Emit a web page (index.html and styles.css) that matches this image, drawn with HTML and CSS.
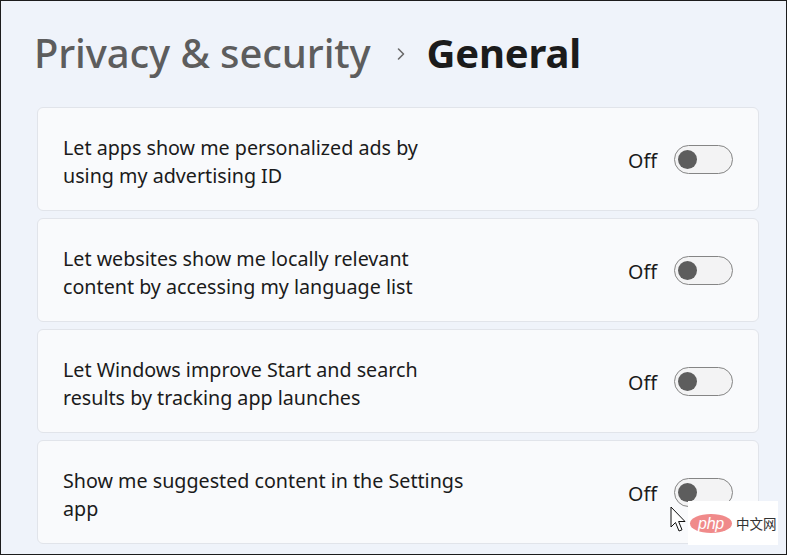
FILE: index.html
```html
<!DOCTYPE html>
<html>
<head>
<meta charset="utf-8">
<link rel="stylesheet" href="styles.css">
</head>
<body>
<div class="frame">
  <header class="crumbs">
    <span class="parent">Privacy &amp; security</span>
    <svg class="chev" width="12" height="14" viewBox="0 0 12 14"><path d="M3.5 2 L8.5 7 L3.5 12" fill="none" stroke="#6a6a6a" stroke-width="1.6" stroke-linecap="round" stroke-linejoin="round"/></svg>
    <span class="current">General</span>
  </header>
  <div class="list">
    <div class="card">
      <div class="label">Let apps show me personalized ads by<br>using my advertising ID</div>
      <div class="ctl"><span class="state">Off</span><span class="toggle"><span class="knob"></span></span></div>
    </div>
    <div class="card">
      <div class="label">Let websites show me locally relevant<br>content by accessing my language list</div>
      <div class="ctl"><span class="state">Off</span><span class="toggle"><span class="knob"></span></span></div>
    </div>
    <div class="card">
      <div class="label">Let Windows improve Start and search<br>results by tracking app launches</div>
      <div class="ctl"><span class="state">Off</span><span class="toggle"><span class="knob"></span></span></div>
    </div>
    <div class="card">
      <div class="label">Show me suggested content in the Settings<br>app</div>
      <div class="ctl"><span class="state">Off</span><span class="toggle"><span class="knob"></span></span></div>
    </div>
  </div>
  <svg class="cursor" width="18" height="28" viewBox="0 0 18 28"><path d="M1 1 L1 21 L5.5 16.5 L9 25 L12 23.8 L8.6 15.5 L15 15.5 Z" fill="#fff" stroke="#111" stroke-width="1" stroke-linejoin="round"/></svg>
  <div class="watermark">
    <span class="php">php</span>
    <span class="cn">中文网</span>
  </div>
</div>
</body>
</html>
```
FILE: styles.css
```css
html, body {
  margin: 0;
  padding: 0;
  background: #ffffff;
}
.frame {
  position: relative;
  width: 785px;
  height: 553px;
  border: 1px solid #1c1c1c;
  background: #eff3fa;
  font-family: "Noto Sans", "Open Sans", sans-serif;
  overflow: hidden;
}
.crumbs {
  display: flex;
  align-items: center;
  height: 106px;
  padding-left: 33px;
  padding-bottom: 4px;
  box-sizing: border-box;
}
.parent {
  font-size: 40px;
  font-weight: 500;
  color: #5d5d5d;
  letter-spacing: -0.1px;
}
.chev {
  margin: 4px 20px 0 24px;
}
.current {
  font-size: 40px;
  font-weight: 700;
  color: #1b1b1b;
  letter-spacing: -0.2px;
}
.list {
  display: flex;
  flex-direction: column;
  gap: 7px;
  margin-left: 36px;
  width: 722px;
}
.card {
  height: 104px;
  box-sizing: border-box;
  border: 1px solid #e1e4ea;
  border-radius: 6px;
  background: #f9fafc;
  display: flex;
  align-items: center;
  justify-content: space-between;
  padding: 0 25px 0 25px;
}
.label {
  font-size: 19.7px;
  line-height: 28px;
  color: #1b1b1b;
  padding-top: 6px;
}
.ctl {
  display: flex;
  align-items: center;
  gap: 17px;
}
.state {
  font-size: 19.7px;
  color: #1b1b1b;
  padding-top: 3px;
}
.toggle {
  width: 59px;
  height: 29px;
  box-sizing: border-box;
  border: 1.5px solid #858585;
  border-radius: 15px;
  background: #f3f3f4;
  display: flex;
  align-items: center;
  padding-left: 3px;
}
.knob {
  width: 19px;
  height: 19px;
  border-radius: 50%;
  background: #5d5d5d;
}
.cursor {
  position: absolute;
  left: 669px;
  top: 505px;
}
.watermark {
  position: absolute;
  left: 687px;
  top: 500px;
  width: 90px;
  height: 44px;
  background: #ffffff;
  display: flex;
  align-items: center;
  padding-left: 2px;
  box-sizing: border-box;
  gap: 4px;
  white-space: nowrap;
}
.php {
  flex: none;
  width: 42px;
  height: 19px;
  border-radius: 50%;
  background: #f08a8a;
  color: #ffffff;
  font-family: "Liberation Sans", sans-serif;
  font-style: italic;
  font-size: 16px;
  line-height: 19px;
  text-align: center;
  letter-spacing: -0.3px;
}
.cn {
  flex: none;
  font-family: "Noto Sans CJK SC", sans-serif;
  font-size: 13.5px;
  color: #333333;
}
```
